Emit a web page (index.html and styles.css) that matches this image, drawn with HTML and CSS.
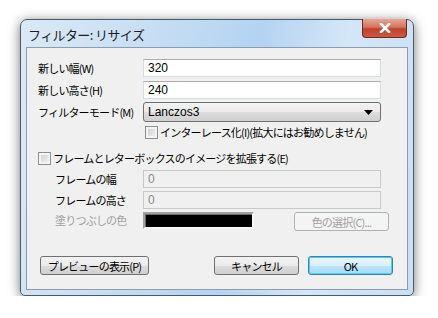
FILE: index.html
```html
<!DOCTYPE html>
<html lang="ja">
<head>
    <meta charset="UTF-8">
    <title>フィルター: リサイズ</title>
    <link rel="stylesheet" href="styles.css">
</head>
<body>
    <div class="window">
        <div class="titlebar">
            <span class="title">フィルター: リサイズ</span>
            <div class="close">
                <svg width="14" height="10" viewBox="0 0 14 10">
                    <path d="M3 1 L11 9 M11 1 L3 9" stroke="#fff" stroke-width="2.6" stroke-linecap="square"/>
                </svg>
            </div>
        </div>
        <div class="client">
            <div class="row r-w">
                <label class="lbl">新しい幅(W)</label>
                <div class="field">320</div>
            </div>
            <div class="row r-h">
                <label class="lbl">新しい高さ(H)</label>
                <div class="field">240</div>
            </div>
            <div class="row r-mode">
                <label class="lbl">フィルターモード(M)</label>
                <div class="combo">
                    <span>Lanczos3</span>
                    <svg width="9" height="5" viewBox="0 0 9 5"><path d="M0 0 H9 L4.5 5 Z" fill="#000"/></svg>
                </div>
            </div>
            <div class="row r-inter">
                <span class="lbl"></span>
                <span class="check"></span>
                <span class="ctext">インターレース化(I)(拡大にはお勧めしません)</span>
            </div>
            <div class="row r-frame">
                <span class="check"></span>
                <span class="ctext">フレームとレターボックスのイメージを拡張する(E)</span>
            </div>
            <div class="row r-fw">
                <label class="lbl sub">フレームの幅</label>
                <div class="field off">0</div>
            </div>
            <div class="row r-fh">
                <label class="lbl sub">フレームの高さ</label>
                <div class="field off">0</div>
            </div>
            <div class="row r-fill">
                <label class="lbl sub dim">塗りつぶしの色</label>
                <div class="swatch"></div>
                <div class="btn pick">色の選択(C)...</div>
            </div>
            <div class="row r-btns">
                <div class="btn preview">プレビューの表示(P)</div>
                <div class="btn cancel">キャンセル</div>
                <div class="btn ok">OK</div>
            </div>
        </div>
    </div>
</body>
</html>
```

FILE: styles.css
```css
body {
    margin: 0;
    background: #ffffff;
    font-family: "Liberation Sans", "Noto Sans CJK JP", sans-serif;
    font-size: 12px;
    color: #000;
}
.window {
    margin: 19px 0 0 20px;
    width: 394px;
    height: 277px;
    box-sizing: border-box;
    border: 1px solid #4a5a6a;
    border-radius: 7px 7px 5px 5px;
    background: linear-gradient(100deg, #dbe9f6 0%, #c3dcf3 35%, #b3d3f1 55%, #d4e6f7 75%, #c9dff4 100%);
    box-shadow: 0 2px 12px rgba(0, 0, 0, 0.55);
    display: flex;
    flex-direction: column;
    padding: 0 5px 5px 5px;
}
.titlebar {
    height: 27px;
    display: flex;
    align-items: center;
    position: relative;
}
.title {
    font-family: "Noto Sans CJK JP", sans-serif;
    font-size: 13px;
    color: #1e1e1e;
    margin: 1px 0 0 2px;
    letter-spacing: -0.6px;
}
.close {
    position: absolute;
    right: 1px;
    top: -1px;
    width: 45px;
    height: 19px;
    box-sizing: border-box;
    border: 1px solid #6b2a22;
    border-top: none;
    border-radius: 0 0 4px 4px;
    background: linear-gradient(#e8a595 0%, #d6735e 45%, #c0402a 55%, #cc5a3e 100%);
    display: flex;
    align-items: center;
    justify-content: center;
}
.client {
    flex: 1;
    background: #f0f0f0;
    border: 1px solid #8a9cb0;
    padding: 11px 0 0 11px;
    display: flex;
    flex-direction: column;
    font-family: "Noto Sans CJK JP", sans-serif;
    font-size: 11px;
    letter-spacing: -0.8px;
    white-space: nowrap;
}
.row {
    display: flex;
    align-items: center;
}
.lbl {
    width: 105px;
    flex: none;
}
.lbl.sub {
    padding-left: 17px;
    box-sizing: border-box;
}
.dim {
    color: #a0a0a0;
}
.field {
    width: 238px;
    height: 18px;
    box-sizing: border-box;
    border: 1px solid #d5dbe2;
    border-top-color: #abadb3;
    background: #fff;
    padding: 0 4px;
    line-height: 16px;
    font-family: "Liberation Sans", sans-serif;
    font-size: 12px;
    letter-spacing: 0;
}
.field.off {
    background: #f0f0f0;
    border-color: #c8c8c8;
    color: #8a8a8a;
}
.r-w { height: 18px; }
.r-h { height: 18px; margin-top: 4px; }
.r-mode { height: 20px; margin-top: 3px; }
.combo {
    width: 238px;
    height: 20px;
    box-sizing: border-box;
    border: 1px solid #707070;
    border-radius: 3px;
    background: linear-gradient(#f2f2f2 0%, #ebebeb 50%, #dddddd 51%, #cfcfcf 100%);
    display: flex;
    align-items: center;
    justify-content: space-between;
    padding: 0 7px 0 4px;
    font-family: "Liberation Sans", sans-serif;
    font-size: 12px;
    letter-spacing: 0;
}
.check {
    width: 13px;
    height: 13px;
    box-sizing: border-box;
    border: 1px solid #8f8f8f;
    background: linear-gradient(135deg, #cbcbcb, #f6f6f6);
    box-shadow: inset 0 0 0 2px #f4f4f4;
    flex: none;
    margin-right: 2px;
}
.r-inter { height: 14px; margin-top: 3px; }
.r-inter .lbl { width: 107px; }
.r-frame { height: 14px; margin-top: 12px; }
.r-fw { height: 18px; margin-top: 5px; }
.r-fh { height: 18px; margin-top: 3px; }
.r-fill { height: 20px; margin-top: 3px; align-items: flex-start; }
.r-fill .lbl { line-height: 17px; }
.swatch {
    width: 111px;
    height: 17px;
    box-sizing: border-box;
    background: #000;
    border: 2px solid #a0a0a0;
    border-right-color: #f8f8f8;
    border-bottom-color: #f8f8f8;
    box-shadow: inset 1px 1px 0 #6a6a6a;
}
.btn {
    height: 19px;
    box-sizing: border-box;
    border: 1px solid #707070;
    border-radius: 3px;
    background: linear-gradient(#f2f2f2 0%, #ebebeb 50%, #dddddd 51%, #cfcfcf 100%);
    display: flex;
    align-items: center;
    justify-content: center;
}
.btn.pick {
    width: 95px;
    height: 19px;
    margin-left: 40px;
    border-color: #adb2b5;
    background: #f4f4f4;
    color: #a0a0a0;
}
.r-btns { margin-top: 24px; }
.preview { width: 109px; margin-left: 2px; }
.cancel { width: 85px; margin-left: 65px; }
.ok {
    width: 85px;
    margin-left: 9px;
    border-color: #3c7fb1;
    box-shadow: inset 0 0 0 1px #48d0f6;
    background: linear-gradient(#eaf6fd 0%, #d9f0fc 50%, #bee6fd 51%, #a7d9f5 100%);
}
```
